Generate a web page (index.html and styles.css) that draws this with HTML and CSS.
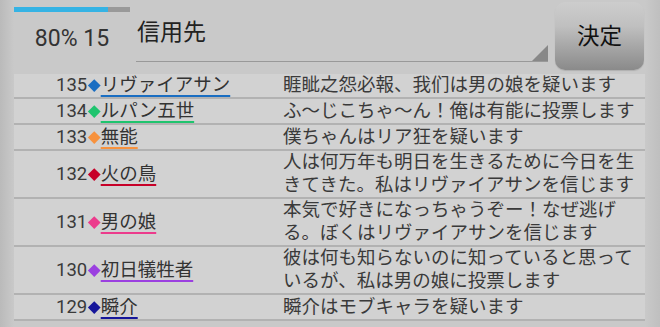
FILE: index.html
```html
<!DOCTYPE html>
<html>
  <head>
  <meta charset="utf-8">
  <link rel="stylesheet" href="styles.css">
  </head>
  <body>
    <div class="top">
      <div class="status">
        <div class="bar"><div class="bar_fill" style="width: 81%;"></div></div>
        <div class="count">80% 15</div>
      </div>
      <div class="field">
        <span class="field_text">信用先</span>
        <span class="field_arrow"></span>
      </div>
      <div class="ok_btn">決定</div>
    </div>
    <div class="list">
      <div class="row">
        <div class="who"><span class="num">135</span><span class="mark c_blue"></span><span class="name c_blue">リヴァイアサン</span></div>
        <div class="msg">睚眦之怨必報、我们は男の娘を疑います</div>
      </div>
      <div class="row">
        <div class="who"><span class="num">134</span><span class="mark c_green"></span><span class="name c_green">ルパン五世</span></div>
        <div class="msg">ふ〜じこちゃ〜ん！俺は有能に投票します</div>
      </div>
      <div class="row">
        <div class="who"><span class="num">133</span><span class="mark c_orange"></span><span class="name c_orange">無能</span></div>
        <div class="msg">僕ちゃんはリア狂を疑います</div>
      </div>
      <div class="row">
        <div class="who"><span class="num">132</span><span class="mark c_red"></span><span class="name c_red">火の鳥</span></div>
        <div class="msg">人は何万年も明日を生きるために今日を生きてきた。私はリヴァイアサンを信じます</div>
      </div>
      <div class="row">
        <div class="who"><span class="num">131</span><span class="mark c_pink"></span><span class="name c_pink">男の娘</span></div>
        <div class="msg">本気で好きになっちゃうぞー！なぜ逃げる。ぼくはリヴァイアサンを信じます</div>
      </div>
      <div class="row">
        <div class="who"><span class="num">130</span><span class="mark c_purple"></span><span class="name c_purple">初日犠牲者</span></div>
        <div class="msg">彼は何も知らないのに知っていると思っているが、私は男の娘に投票します</div>
      </div>
      <div class="row">
        <div class="who"><span class="num">129</span><span class="mark c_navy"></span><span class="name c_navy">瞬介</span></div>
        <div class="msg">瞬介はモブキャラを疑います</div>
      </div>
    </div>
  </body>
</html>
```

FILE: styles.css
```css
body {
  margin: 0;
  height: 327px;
  overflow: hidden;
  background: linear-gradient(to right, #bababa 0, #c9c9c9 14px, #c9c9c9 645px, #bfbfbf 660px);
  font-family: Roboto, "Noto Sans CJK JP", sans-serif;
  color: #333;
}
.top {
  display: flex;
  height: 72px;
  padding-left: 14px;
}
.status {
  width: 122px;
}
.bar {
  width: 116px;
  height: 5px;
  margin-top: 7px;
  background-color: #999;
}
.bar_fill {
  height: 5px;
  background-color: #35b3e4;
}
.count {
  width: 116px;
  margin-top: 13px;
  text-align: center;
  font-size: 23px;
  line-height: 28px;
  color: #333;
}
.field {
  position: relative;
  width: 412px;
  height: 62px;
  border-bottom: 1px solid #999;
  box-sizing: border-box;
}
.field_text {
  display: block;
  margin-top: 17px;
  padding-left: 1px;
  font-size: 23px;
  line-height: 32px;
  color: #222;
}
.field_arrow {
  position: absolute;
  right: 0;
  bottom: 0;
  width: 0;
  height: 0;
  border-left: 16px solid transparent;
  border-bottom: 16px solid #888;
}
.ok_btn {
  width: 89px;
  height: 68px;
  margin: 2px 0 0 7px;
  border-radius: 10px;
  background: linear-gradient(to bottom, #cdcdcd 0%, #c0c0c0 35%, #8a8a8a 100%);
  box-shadow: 0 1px 1px #b0b0b0;
  text-align: center;
  font-size: 22.5px;
  line-height: 68px;
  color: #111;
}
.list {
  margin: 2px 15px 0 14px;
  background-color: #d2d2d2;
}
.row {
  display: flex;
  align-items: center;
  min-height: 24px;
  border-bottom: 2px solid #b2b2b2;
  font-size: 18.5px;
  line-height: 23px;
}
.row:first-child {
  min-height: 23px;
}
.who {
  display: flex;
  align-items: center;
  width: 227px;
  padding-left: 42px;
  flex-shrink: 0;
}
.num {
  color: #3a3a3a;
}
.mark {
  display: inline-block;
  width: 8.5px;
  height: 8.5px;
  margin: 0 2.5px 0 2.5px;
  transform: rotate(45deg);
}
.name {
  color: #333;
  text-decoration: underline;
  text-decoration-thickness: 2px;
  text-underline-offset: 4px;
}
.msg {
  flex: 1;
  color: #3a3a3a;
}
.c_blue { background-color: #1a6ec2; text-decoration-color: #1a6ec2; }
.c_green { background-color: #1fc46e; text-decoration-color: #1fc46e; }
.c_orange { background-color: #f7923e; text-decoration-color: #f7923e; }
.c_red { background-color: #c70028; text-decoration-color: #c70028; }
.c_pink { background-color: #ec3b8c; text-decoration-color: #ec3b8c; }
.c_purple { background-color: #9b40e0; text-decoration-color: #9b40e0; }
.c_navy { background-color: #16169a; text-decoration-color: #16169a; }
.name.c_blue, .name.c_green, .name.c_orange, .name.c_red,
.name.c_pink, .name.c_purple, .name.c_navy { background-color: transparent; }
```
